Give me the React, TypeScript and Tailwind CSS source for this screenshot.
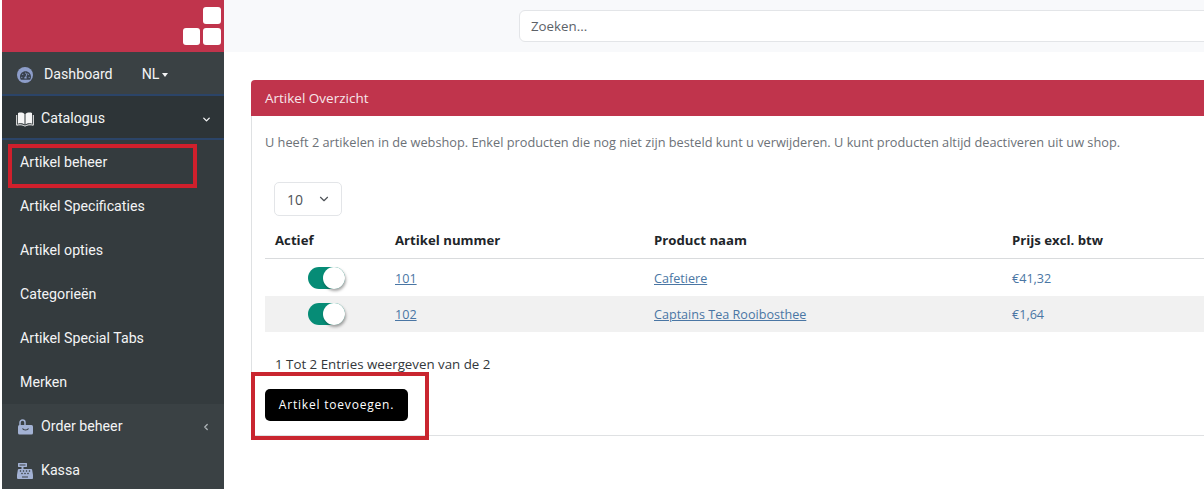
import { ChevronDown, ChevronLeft } from 'lucide-react';
import { FaCashRegister, FaTachometerAlt } from 'react-icons/fa';

const subItems = ['Artikel beheer', 'Artikel Specificaties', 'Artikel opties', 'Categorieën', 'Artikel Special Tabs', 'Merken'];

const rows = [
  { nr: '101', name: 'Cafetiere', price: '€41,32', height: 'h-[37px]' },
  { nr: '102', name: 'Captains Tea Rooibosthee', price: '€1,64', height: 'h-[36px] bg-[#f1f1f1]' },
];

function Logo() {
  return (
    <div className="h-[52px] bg-[#c0344c] flex justify-end pt-[7px] pr-[3px] shrink-0">
      <div className="grid grid-cols-[17px_18px] grid-rows-[17px_17px] gap-x-[3px] gap-y-[4px]">
        <span />
        <span className="bg-white rounded-[3px]" />
        <span className="bg-white rounded-[3px]" />
        <span className="bg-white rounded-[3px]" />
      </div>
    </div>
  );
}

function BookIcon() {
  return (
    <svg width="18" height="15" viewBox="0 0 18 15" className="shrink-0">
      <path d="M2 1c2.500-.8 5-.5 6.500 1v10.500C7 11.200 4.500 11 2 11.700z" fill="#f5f5f5" />
      <path d="M16 1c-2.500-.8-5-.5-6.500 1v10.500c1.500-1.300 4-1.500 6.500-.8z" fill="#f5f5f5" />
      <path d="M.7 3v10.200c3-.8 6-.5 8.300.9 2.300-1.400 5.300-1.700 8.300-.9V3" fill="none" stroke="#f5f5f5" strokeWidth="1" />
    </svg>
  );
}

function BagIcon() {
  return (
    <svg width="17" height="16" viewBox="0 0 17 16" className="shrink-0">
      <path d="M3 7V3.500a2.500 2.500 0 0 1 5 0V7" fill="none" stroke="#a3b2d4" strokeWidth="1.5" />
      <rect x="1" y="6" width="15" height="9.500" rx="1.500" fill="#a3b2d4" />
      <path d="M5.500 9.500c1 2 5 2 6 0" fill="none" stroke="#3a4144" strokeWidth="1.200" />
    </svg>
  );
}

function Sidebar() {
  return (
    <aside className="w-[222px] ml-[2px] shrink-0 flex flex-col bg-[#343b3e] font-['Roboto',sans-serif] text-[14.2px] text-[#f3f4f5]">
      <Logo />
      <div className="h-[44px] flex items-center pl-[15px] pt-[4px] border-b-[2px] border-[#2b4468] bg-[#3a4144] shrink-0">
        <span className="w-[16px] h-[16px] rounded-full bg-[#8d9dc9] flex items-center justify-center">
          <FaTachometerAlt className="text-[#39424f] text-[11px]" />
        </span>
        <span className="ml-[11px]">Dashboard</span>
        <span className="ml-[29px]">NL</span>
        <span className="ml-[3px] border-x-[3.5px] border-t-[4px] border-x-transparent border-t-[#f3f4f5]" />
      </div>
      <div className="h-[44px] flex items-center pl-[14px] pr-[12px] pt-[4px] bg-[#2d3437] border-b-[2px] border-[#2b4468] shrink-0">
        <BookIcon />
        <span className="ml-[7px]">Catalogus</span>
        <ChevronDown size={11} strokeWidth={3} className="ml-auto" />
      </div>
      {subItems.map(item => (
        <div key={item} className="h-[44px] flex items-center pl-[18px] pt-[2px] shrink-0">
          {item}
        </div>
      ))}
      <div className="h-[44px] flex items-center pl-[15px] pr-[13px] pt-[2px] bg-[#3a4144] shrink-0">
        <BagIcon />
        <span className="ml-[7px]">Order beheer</span>
        <ChevronLeft size={10} strokeWidth={3} className="ml-auto text-[#aeb4b8]" />
      </div>
      <div className="h-[44px] flex items-center pl-[15px] pt-[2px] bg-[#3a4144] shrink-0">
        <FaCashRegister className="text-[#a3b2d4] text-[16px]" />
        <span className="ml-[8px]">Kassa</span>
      </div>
    </aside>
  );
}

function Toggle() {
  return (
    <div className="relative w-[37px] h-[22px] rounded-full bg-[#068c76]">
      <span className="absolute right-0 top-0 w-[22px] h-[22px] rounded-full bg-white shadow-[1px_2px_3px_rgba(0,0,0,0.35)]" />
    </div>
  );
}

export default function App() {
  return (
    <div className="w-[1204px] h-[489px] overflow-hidden flex bg-white font-['Open_Sans',sans-serif]">
      <Sidebar />
      <main className="flex-1 min-w-0 flex flex-col">
        <header className="h-[52px] bg-[#f8f9fb] pl-[295px] pt-[10px] shrink-0">
          <div className="h-[32px] w-[700px] bg-white border border-[#e3e5e8] rounded-l-[6px] pl-[11px] pt-[1px] flex items-center text-[13.3px] text-[#5c6268]">
            Zoeken...
          </div>
        </header>
        <section className="ml-[27px] mt-[28px] w-[1100px] relative">
          <div className="h-[36px] bg-[#c0344c] rounded-t-[4px] pl-[14px] pt-[1px] flex items-center text-[13.5px] text-[#f7e6e9]">
            Artikel Overzicht
          </div>
          <div className="border-l border-b border-[#dfe1e3] h-[320px] pl-[13px]">
            <p className="pt-[17px] text-[12.75px] leading-[18px] text-[#6c7177]">
              U heeft 2 artikelen in de webshop. Enkel producten die nog niet zijn besteld kunt u verwijderen. U kunt producten altijd deactiveren uit uw shop.
            </p>
            <div className="ml-[9px] mt-[31px] w-[68px] h-[34px] border border-[#e3e5e8] rounded-[5px] flex items-center pl-[12px] text-[14px] text-[#4e5358]">
              10
              <ChevronDown size={14} className="ml-[14px]" />
            </div>
            <div className="grid grid-cols-[130px_259px_358px_1fr] h-[43px] items-center pt-[8px] border-b border-[#d9dbdd] text-[13.2px] font-bold text-[#212529]">
              <span className="pl-[10px]">Actief</span>
              <span>Artikel nummer</span>
              <span>Product naam</span>
              <span>Prijs excl. btw</span>
            </div>
            {rows.map(row => (
              <div key={row.nr} className={`grid grid-cols-[130px_259px_358px_1fr] items-center text-[12.6px] text-[#4a76a4] ${row.height}`}>
                <span className="pl-[43px]">
                  <Toggle />
                </span>
                <a className="underline pt-[3px]">{row.nr}</a>
                <a className="underline pt-[3px]">{row.name}</a>
                <span className="pt-[3px]">{row.price}</span>
              </div>
            ))}
            <p className="ml-[10px] mt-[23px] text-[13.3px] leading-[18px] text-[#33373b]">1 Tot 2 Entries weergeven van de 2</p>
            <button className="mt-[16px] h-[32px] w-[143px] bg-black rounded-[5px] text-white text-[12px] font-medium tracking-[0.8px]">
              Artikel toevoegen.
            </button>
          </div>
        </section>
      </main>
      {/* annotation frames drawn over the screenshot */}
      <div className="absolute left-[8px] top-[144px] w-[189px] h-[44px] border-[4px] border-[#d0202c]" />
      <div className="absolute left-[251px] top-[372px] w-[178px] h-[68px] border-[4px] border-[#c9252f]" />
    </div>
  );
}
